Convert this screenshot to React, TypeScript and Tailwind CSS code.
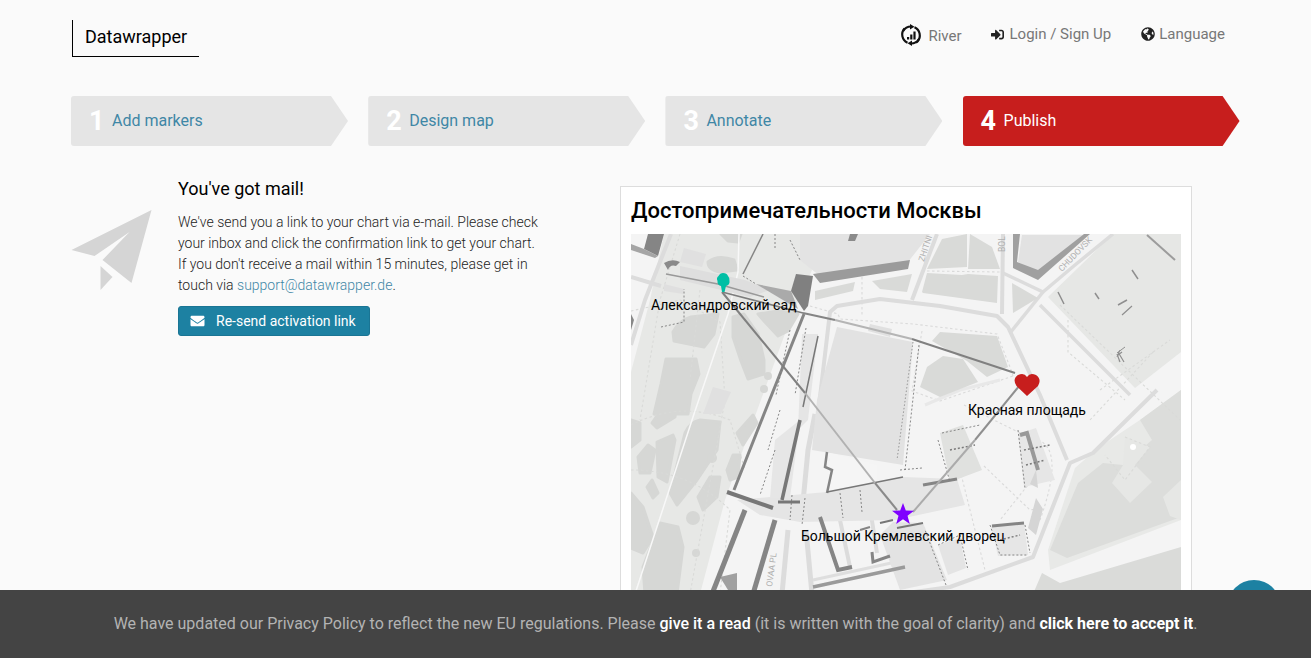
import { FaEnvelope, FaGlobeAmericas, FaSignInAlt } from "react-icons/fa";

const steps = [
  { n: "1", label: "Add markers", active: false },
  { n: "2", label: "Design map", active: false },
  { n: "3", label: "Annotate", active: false },
  { n: "4", label: "Publish", active: true },
];

const blobs = [
  "M670 493 L685 433 Q690 422 700 420 L720 422 L717 450 L697 480 L677 505Z",
  "M652 423 L663 407 L677 403 L675 417 L657 428Z",
  "M631 420 L640 423 L640 440 L631 447Z",
  "M638 457 L648 445 L655 450 L650 473 L640 473Z",
  "M657 442 L673 435 L675 440 L667 482 L658 477Z",
  "M647 487 L652 480 L658 493 L653 498Z",
  "M631 493 L643 507 L653 537 L643 553 L631 548Z",
  "M660 523 L678 527 L683 547 L677 594 L645 594 L643 567Z",
  "M698 497 L710 477 L720 477 L717 497 L703 510Z",
  "M727 470 L733 455 L740 455 L738 477 L730 480Z",
  "M737 433 L753 415 L757 423 L743 445Z",
  "M708 262 Q718 254 734 260 L737 270 L720 272 Q708 270 708 262Z",
  "M721 234 L741 234 L738 242 L728 241Z",
  "M673 332 Q680 320 691 317 L718 314 L714 334 L704 347 L674 341Z",
  "M733 317 L744 314 L758 334 L764 360 L764 374 L748 379 L741 361 L733 337Z",
  "M758 314 L778 311 L798 314 L788 331 L778 336 L764 321Z",
  "M666 359 L696 359 L699 374 L691 394 L688 414 L654 414 L661 384Z",
];

function MapArt() {
  return (
    <svg viewBox="631 234 550 360" className="block h-[360px] w-full">
      <rect x="631" y="234" width="550" height="360" fill="#f4f4f4" />
      {/* parks */}
      <path d="M664 234 L800 234 L812 270 L790 320 L750 430 L725 500 L700 594 L631 594 L631 372 L650 300Z" fill="#e7e8e6" />
      <path d="M1048 297 L1113 234 L1181 234 L1181 352 L1135 388Z" fill="#e6e7e5" />
      <path d="M1181 390 L1140 420 L1110 440 L1090 455 L1075 468 L1048 550 L1050 570 L1181 520Z" fill="#e8e9e7" />
      <path d="M1181 390 L1140 420 L1152 440 L1123 465 L1103 463 L1078 483 L1050 550 L1067 558 L1181 517Z" fill="#dcdddb" />
      <path d="M1125 437 L1150 447 L1135 465 L1152 482 L1130 503 L1112 483 L1123 465Z" fill="#e6e7e5" />
      <path d="M1163 497 L1181 480 L1181 520 L1170 516Z" fill="#e6e7e5" />
      <path d="M1042 573 L1060 583 L1181 547 L1181 594 L1033 594Z" fill="#dadbd9" />
      <g stroke="#d6d7d5" strokeWidth="3" strokeLinejoin="round">
        {blobs.map((d, i) => (
          <path key={i} d={d} fill="#d6d7d5" />
        ))}
      </g>
      <circle cx="768" cy="376" r="4" fill="#d6d7d5" />
      <circle cx="764" cy="389" r="4" fill="#d6d7d5" />
      <circle cx="693" cy="518" r="7" fill="#d6d7d5" />
      <circle cx="696" cy="553" r="4" fill="#d6d7d5" />
      <circle cx="712" cy="458" r="5" fill="#d6d7d5" />
      <circle cx="1133" cy="447" r="3" fill="#ffffff" />
      {/* park paths */}
      <g fill="none" stroke="#d9dad8" strokeWidth="1.100" strokeDasharray="2.500 2.500">
        <path d="M631 311 L680 300 L720 322 L725 400 L690 594" />
        <path d="M631 425 Q680 400 730 420 L745 470" />
        <path d="M631 470 Q690 470 730 510 L720 594" />
        <path d="M1060 305 L1180 420" />
        <path d="M1100 390 L1170 340" />
        <path d="M1090 420 L1155 350" />
        <path d="M1068 320 L1068 352 L1125 400" />
        <path d="M1125 437 L1150 447 L1125 480 L1105 455" />
        <path d="M964 405 L1030 438 M984 466 L1030 510 L1042 508 M960 470 L985 570 M1040 470 L1000 520" stroke="#dadada" />
        <path d="M1038 440 Q1065 450 1040 520" stroke="#dadada" />
        <path d="M810 306 L838 314 L840 319 L913 324 L997 334 L1010 367 L1013 376" stroke="#dadada" />
        <path d="M922 331 L912 391 L940 401 L1013 376" stroke="#dadada" />
        <path d="M862 277 L862 317 M927 271 L1000 272" stroke="#dadada" />
        <path d="M680 234 L660 300 L640 420 M700 290 L690 380" />
      </g>
      {/* roads */}
      <path d="M739 234 L738 272 L728 314 L694 414 L635 594" stroke="#f8f8f8" strokeWidth="1.500" fill="none" />
      <g fill="none" stroke="#dcdcdc" strokeWidth="4" strokeLinejoin="round">
        <path d="M671 234 L645 300 L631 345" />
        <path d="M631 277 L661 286" />
        <path d="M1157 390 L1093 453 L1070 463 L1033 557 L950 587 L900 594" />
        <path d="M818 414 L830 312 L837 306 L880 299 L940 306 L997 316 L1008 327 L1040 395 L1067 460" />
        <path d="M1040 305 L1130 395" strokeWidth="3.500" />
        <path d="M1003 234 L1002 314" />
        <path d="M937 234 L912 300" />
        <path d="M1003 273 L1043 292 L1075 265 L1113 234" strokeWidth="3.500" />
        <path d="M1043 292 L1010 333" strokeWidth="3.500" />
        <path d="M815 414 L808 450 L803 502 M788 530 L782 594 M806 530 L812 594" strokeWidth="5" />
        <path d="M830 458 L870 470" strokeWidth="5" stroke="#dfdfdf" />
        <path d="M827 517 L870 508 L877 553 M840 520 L850 567" strokeWidth="4" />
        <path d="M1000 380 L960 390 L925 405" strokeWidth="3" stroke="#e8e8e8" />
        <path d="M813 580 L905 560" strokeWidth="3" stroke="#dedede" />
      </g>
      {/* city blocks */}
      <g fill="#d9dad8">
        <path d="M872 281 L912 274 L907 292 L880 289Z" />
        <path d="M815 291 L855 282 L853 291 L815 300Z" />
        <path d="M922 292 L927 273 L962 275 L968 274 L998 276 L997 303 L923 293Z" />
        <path d="M927 269 L942 239 L967 234 L967 267Z" />
        <path d="M970 234 L992 247 L1000 269 L968 269Z" />
        <path d="M1012 283 L1038 298 L1013 313Z" />
        <path d="M932 341 L940 332 L997 336 L1008 367 L987 377 L967 361Z" />
        <path d="M920 387 L927 367 L943 356 L963 359 L978 382 L940 397Z" />
      </g>
      <path d="M837 327 L913 342 L903 465 L812 450 L817 400Z" fill="#e2e2e2" />
      <path d="M913 342 L897 460" stroke="#8f8f8f" strokeWidth="0.900" strokeDasharray="1.500 2" fill="none" />
      <path d="M870 324 L892 329 L890 337 L868 331Z" fill="#e0e0e0" />
      <path d="M802 334 L818 334 L808 420 L798 430Z" fill="#e5e5e5" />
      <path d="M800 234 L850 234 L930 234 L908 262 L820 276 L800 260Z" fill="#e3e3e3" />
      <path d="M850 234 L858 234 L855 241 L848 241Z" fill="#8b8b8b" />
      <path d="M737 500 L827 492 L903 477 L957 479 L965 505 L895 520 L800 522 L760 515Z" fill="#e5e5e5" />
      <path d="M830 453 L877 465 L877 482 L827 492Z" fill="#f5f5f5" />
      <path d="M775 440 L800 420 L790 498 L770 498Z" fill="#e6e6e6" />
      <path d="M923 523 L947 580 L900 590 L880 535 L893 522Z" fill="#e3e3e3" />
      <path d="M940 433 L963 425 L982 470 L950 482Z" fill="#e0e1df" />
      <path d="M1018 434 L1036 428 L1055 480 L1024 487Z" fill="#e6e6e6" />
      <path d="M991 526 L1024 522 L1028 555 L998 556Z" fill="#e6e6e6" />
      <path d="M1036 498 L1043 509 L1036 535 L1028 528Z M1038 488 L1030 484 L1036 470Z" fill="#d5d5d5" />
      <path d="M938 545 L960 538 L966 568 L948 575Z" fill="#e4e4e4" />
      <path d="M680 266 L745 280 L770 290 L750 297 L680 280Z" fill="#dedede" />
      <path d="M664 284 L684 289 L683 294 L664 291Z" fill="#dfdfdf" />
      <path d="M713 387 L731 392 L721 414 L703 414Z" fill="#e0e0e0" />
      <path d="M684 248 L706 254 L702 267 L680 262Z" fill="#e0e0e0" />
      <path d="M1022 235 L1018 262 L1038 272 L1083 235Z" fill="#e2e2e2" />
      <path d="M756 284 L791 291 L798 309Z" fill="#aaaaaa" />
      {/* dark building walls */}
      <g fill="#8e8e8e">
        <path d="M813 274 L910 260 L908 269 L820 283Z" fill="#9b9b9b" />
        <path d="M791 291 L796 274 L813 276 L808 306 L804 311Z" fill="#808080" />
        <path d="M648 234 L664 234 L658 256 L644 249Z" fill="#858585" />
        <path d="M631 244 L644 249 L658 256 L655 258 L631 250Z" fill="#a5a5a5" />
        <path d="M1013 234 L1020 234 L1017 262 L1038 270 L1084 234 L1090 234 L1038 280 L1013 268Z" fill="#a0a0a0" />
        <path d="M664 263 Q672 258 680 262 L676 266 Q670 264 668 270Z" fill="#8a8a8a" />
        <path d="M631 314 L634 320 L631 330Z" fill="#888" />
        <path d="M720 577 L737 573 L737 594 L728 590Z" fill="#a0a0a0" />
      </g>
      <g fill="none" stroke="#858585" strokeLinejoin="miter">
        <path d="M763 234 L743 274" strokeWidth="1.500" />
        <path d="M804 314 L764 414 L734 490" strokeWidth="3" />
        <path d="M745 510 L712 594" strokeWidth="5" />
        <path d="M775 520 L753 594" strokeWidth="5" />
        <path d="M800 420 L782 500" strokeWidth="3.500" stroke="#777" />
        <path d="M818 336 L803 407" strokeWidth="1.500" stroke="#777" />
        <path d="M727 492 L773 508" strokeWidth="4" stroke="#777" />
        <path d="M778 502 L800 502" strokeWidth="3" stroke="#777" />
        <path d="M827 452 L825 467 L832 470 L827 493" strokeWidth="2.500" />
        <path d="M827 492 L903 477" strokeWidth="1.500" stroke="#777" />
        <path d="M923 485 L957 479" strokeWidth="3" />
        <path d="M820 517 L838 570 L852 567" strokeWidth="4" />
        <path d="M872 552 L873 562 L890 556" strokeWidth="3" />
        <path d="M860 530 L870 527" strokeWidth="2" />
        <path d="M880 523 L893 520 M897 528 L923 523" strokeWidth="2" stroke="#777" />
        <path d="M813 587 L905 567" strokeWidth="3.500" stroke="#9a9a9a" />
        <path d="M1147 235 L1175 260" strokeWidth="2" stroke="#9c9c9c" />
        <path d="M1058 292 L1064 304 M1132 270 L1138 279 M1095 293 L1099 299 M1118 305 L1127 300" strokeWidth="1.500" stroke="#8f8f8f" />
        <path d="M1122 315 L1132 306 M1118 352 L1124 362 M1118 355 L1122 352 M1117 354 L1120 362" strokeWidth="1.200" stroke="#8f8f8f" />
        <path d="M1120 350 L1117 357 M1117 353 L1125 347" strokeWidth="1" stroke="#8f8f8f" />
        <path d="M1020 435 L1027 433 L1038 470" strokeWidth="4" stroke="#999" />
        <path d="M992 526 L1024 523" strokeWidth="3" />
        <path d="M666 274 L718 284 L764 297" strokeWidth="1.500" stroke="#999" />
      </g>
      <g fill="none" stroke="#7a7a7a" strokeWidth="0.900" strokeDasharray="2 2">
        <path d="M919 345 L905 470" />
        <path d="M806 328 L795 395 M790 330 L776 395" />
        <path d="M792 495 L790 520 M805 498 L802 525 M840 493 L843 518 M860 490 L862 512" />
        <path d="M775 450 L760 495 M780 410 L768 450" />
        <path d="M661 327 L684 322 L684 289 M743 276 L756 284" />
        <path d="M900 470 L922 468" />
        <path d="M942 433 L980 425 M938 440 L950 482 M1018 430 L1025 488 M938 545 L960 535 L968 570" />
        <path d="M990 525 L1000 555 L1028 555 M1025 525 L1030 553" />
        <path d="M946 585 L925 530" />
        <path d="M775 234 L775 250 M790 240 L800 260" />
        <path d="M1024 450 L1050 445 M1026 465 L1045 460 M950 450 L975 445 M1000 540 L1020 535" strokeWidth="1.500" />
      </g>
      {/* street names */}
      <g fill="#b0b0b0" fontFamily="Roboto, sans-serif" fontSize="8.500">
        <text transform="translate(924 262) rotate(-72)">ZHITNI</text>
        <text transform="translate(1005 252) rotate(-90)">BOL</text>
        <text transform="translate(1062 272) rotate(-46)">CHUDOVSK</text>
        <text transform="translate(772 587) rotate(-82)">OVAA PL</text>
      </g>
      {/* connector lines */}
      <g fill="none" strokeWidth="2">
        <path d="M722 292 L803 313" stroke="#7d7d7d" strokeWidth="1.500" />
        <path d="M803 313 L835 320" stroke="#858585" />
        <path d="M835 320 L912 339" stroke="#b5b5b5" />
        <path d="M912 339 L1015 373" stroke="#808080" />
        <path d="M722 292 L805 393" stroke="#808080" />
        <path d="M805 393 L875 483" stroke="#b2b2b2" />
        <path d="M875 483 L897 510" stroke="#8a8a8a" />
        <path d="M1020 385 L975 440" stroke="#8f8f8f" />
        <path d="M975 440 L913 512" stroke="#ababab" />
      </g>
      {/* markers */}
      <path d="M723 273 Q727 273 728 276 Q730 278 729.500 281 Q730 285 726 286 L724.500 292 L722 292 L721 286 Q717 285 717.500 281 Q716 278 718.500 276 Q720 273 723 273Z" fill="#00bfa5" />
      <path d="M1027 396 L1016.500 386 Q1012 379 1018 375 Q1024 372 1027 377 Q1030 372 1036 375 Q1042 379 1038 386Z" fill="#c71e1d" />
      <path d="M903 503 L905.800 510.500 L914 510.800 L907.500 515.800 L909.800 524 L903 519.300 L896.200 524 L898.500 515.800 L892 510.800 L900.200 510.500Z" fill="#7f00ff" />
    </svg>
  );
}

function RiverIcon() {
  return (
    <svg viewBox="0 0 22 22" className="h-[22px] w-[22px]" fill="none">
      <path d="M3.200 7 A9 9 0 0 1 11 2.500" stroke="#111" strokeWidth="2.200" />
      <path d="M10 0 L14.500 2.700 L10 5.400Z" fill="#111" />
      <path d="M14.500 3.300 A9 9 0 0 1 17.500 17.500 L16 18.700" stroke="#111" strokeWidth="2.200" />
      <path d="M18.800 15.200 A9 9 0 0 1 11 19.500" stroke="#111" strokeWidth="2.200" />
      <path d="M12 22 L7.500 19.300 L12 16.600Z" fill="#111" />
      <path d="M7.500 18.700 A9 9 0 0 1 4.500 4.500" stroke="#111" strokeWidth="2.200" />
      <path d="M7 13h2.200v2.500h-2.200Z M10.200 10.500h2.200v5h-2.200Z M13.400 7.500h2.200v8h-2.200Z" fill="#111" />
    </svg>
  );
}

export default function App() {
  return (
    <div className="relative h-[658px] overflow-hidden bg-[#fafafa] font-['Roboto',sans-serif] text-black">
      <header className="flex h-[96px] items-start justify-between pl-[72px] pr-[86px] pt-[20px]">
        <div className="h-[37px] w-[127px] border-b border-l border-black pl-3 pt-[5px] text-[18px] leading-[24px]">
          Datawrapper
        </div>
        <nav className="flex items-start text-[15px] leading-[20px] text-[#777]">
          <div className="mr-[29px] mt-[4px] flex items-center gap-[6px]">
            <RiverIcon />
            <span className="pt-[2px]">River</span>
          </div>
          <div className="mr-[30px] mt-[4px] flex items-center gap-[6px]">
            <FaSignInAlt className="h-[13px] w-[13px] text-[#222]" />
            <span>Login / Sign Up</span>
          </div>
          <div className="mt-[4px] flex items-center gap-[4px]">
            <FaGlobeAmericas className="h-[14px] w-[14px] text-[#222]" />
            <span>Language</span>
          </div>
        </nav>
      </header>

      <div className="ml-[71px] flex w-[1169px] gap-[20.200px]">
        {steps.map((s) => (
          <div
            key={s.n}
            className={`flex h-[50px] w-[277px] items-center rounded-[3px] pl-[18px] [clip-path:polygon(0_0,calc(100%-17px)_0,100%_50%,calc(100%-17px)_100%,0_100%)] ${
              s.active ? "bg-[#c71e1d] text-white" : "bg-[#e5e5e5] text-[#3f87a6]"
            }`}
          >
            <span className="w-[23px] text-[27px] font-bold leading-none text-white">{s.n}</span>
            <span className="text-[16px]">{s.label}</span>
          </div>
        ))}
      </div>

      <main className="ml-[71px] mt-[40px] flex items-start">
        <svg viewBox="72 210 80 80" className="mt-[24px] h-[80px] w-[81px] shrink-0" fill="#d5d5d5">
          <path d="M152 210 L72 250 L95 256 L130 232 L103 260 L132 283Z" />
          <path d="M101 266 L113 277 L101 290Z" />
        </svg>
        <div className="-mt-[9px] ml-[26px] w-[372px] shrink-0">
          <h1 className="text-[18px] font-normal leading-[24px]">You've got mail!</h1>
          <p className="mt-[11px] w-[362px] text-[14px] font-light leading-[21px] text-[#222]">
            We've send you a link to your chart via e-mail. Please check your inbox and click the
            confirmation link to get your chart. If you don't receive a mail within 15 minutes,
            please get in touch via <span className="text-[#3f87a6]">support@datawrapper.de</span>.
          </p>
          <button className="mt-[10px] flex h-[30px] w-[192px] items-center gap-[11px] rounded-[3px] border border-[#1a7594] bg-[#1d81a2] pl-[11px] text-[14px] text-white">
            <FaEnvelope className="h-[14px] w-[15px]" />
            Re-send activation link
          </button>
        </div>
        <section className="ml-[70px] w-[572px] shrink-0 border border-[#dddddd] bg-white px-[10px] pt-[10px]">
          <h2 className="h-[37px] text-[22px] font-medium leading-[28px]">Достопримечательности Москвы</h2>
          <div className="relative h-[360px] w-[550px]">
            <MapArt />
            <span className="absolute left-[20px] top-[62px] text-[14px] leading-[18px]">Александровский сад</span>
            <span className="absolute left-[337px] top-[167px] text-[14px] leading-[18px]">Красная площадь</span>
            <span className="absolute left-[170px] top-[293px] text-[14px] leading-[18px]">Большой Кремлевский дворец</span>
          </div>
        </section>
      </main>

      <div className="absolute left-[1227px] top-[580px] h-[54px] w-[54px] rounded-full bg-[#1d81a2]" />
      <div className="absolute bottom-0 left-0 flex h-[68px] w-full items-center justify-center bg-[#444444] text-[16px] text-[#b3b3b3]">
        <span>
          We have updated our Privacy Policy to reflect the new EU regulations. Please{" "}
          <span className="font-medium text-white">give it a read</span> (it is written with the goal of clarity) and{" "}
          <span className="font-bold text-white">click here to accept it</span>.
        </span>
      </div>
    </div>
  );
}
